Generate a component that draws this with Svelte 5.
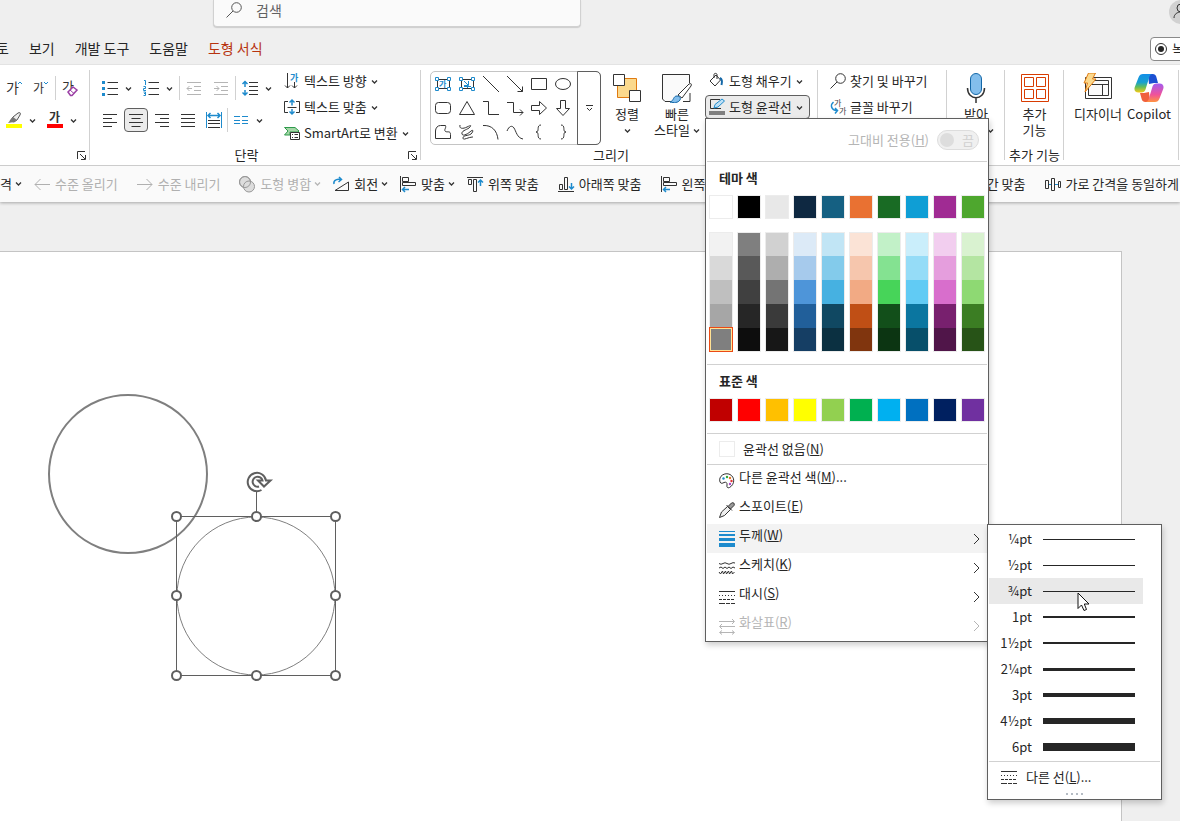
<script>
    const icons = {
        grow: `<text x="0" y="13" font-size="14" fill="#333">가</text><path d="M12 4l2-2 2 2" stroke="#1e8bcd"/>`,
        shrink: `<text x="0" y="13" font-size="12" fill="#333">가</text><path d="M11 2l2 2 2-2" stroke="#1e8bcd"/>`,
        clear: `<text x="0" y="11" font-size="13" fill="#333">가</text><path d="M6 12l5-5 4 3-5 5.500H8.500z" fill="#fff" stroke="#9b3fa5" stroke-width="1.500"/><path d="M8 10l4 3.500" stroke="#9b3fa5"/>`,
        highlight: `<path d="M4 9l3-4 5-4c2-1 3 0 2 2l-3 5-3 2z" fill="#eee" stroke="#555"/><path d="M7 5l4 3-3 2-6 1z" fill="#777" stroke="none"/><path d="M0 12h16v4H0z" fill="#ff0" stroke="none"/>`,
        fontColor: `<text x="2" y="10" font-size="12" font-weight="700" fill="#333">가</text><path d="M0 12h16v4H0z" fill="#f00" stroke="none"/>`,
        bullets: `<path d="M0 1h3v3H0zM0 7h3v3H0zM0 13h3v3H0z" fill="#1e8bcd" stroke="none"/><path d="M5.500 2.500H16M5.500 8.500H16M5.500 14.500H16"/>`,
        numbers: `<path d="M1 .5h1.500V5M.5 6.500h2v2h-2v2h2.500M.5 12h2v3.500h-2M1 13.500h1.500" stroke="#1e8bcd"/><path d="M5.500 2.500H16M5.500 8.500H16M5.500 14.500H16"/>`,
        outdent: `<path d="M1 2.500h14M8 6.500h7M8 10.500h7M1 14.500h14M6 8.500H1M3.500 6L1 8.500 3.500 11" stroke="#b5b5b5"/>`,
        indent: `<path d="M1 2.500h14M8 6.500h7M8 10.500h7M1 14.500h14M1 8.500h5M3.500 6L6 8.500 3.500 11" stroke="#b5b5b5"/>`,
        spacing: `<path d="M3 2v5M3 10v5M.5 4L3 1.500 5.500 4M.5 12.500L3 15l2.500-2.500" stroke="#1e8bcd" stroke-width="1.500"/><path d="M7 2.500h9M7 6.500h9M7 10.500h9M7 14.500h9"/>`,
        left: `<path d="M1 2.500h14M1 6.500h9M1 10.500h14M1 14.500h9"/>`,
        center: `<path d="M1 2.500h14M3.500 6.500h9M1 10.500h14M3.500 14.500h9"/>`,
        right: `<path d="M1 2.500h14M6 6.500h9M1 10.500h14M6 14.500h9"/>`,
        justify: `<path d="M1 2.500h14M1 6.500h14M1 10.500h14M1 14.500h14"/>`,
        distribute: `<path d="M.5 0v16M15.500 0v16" stroke="#1e8bcd"/><path d="M2 3.500h12M4.500 1L2 3.500 4.500 6M11.500 1L14 3.500 11.500 6" stroke="#1e8bcd" stroke-width="1.500"/><path d="M2 8.500h12M2 11.500h12M2 15.500h12"/>`,
        columns: `<path d="M1 4.500h6M1 8.500h6M1 11.500h6M9 4.500h6M9 8.500h6M9 11.500h6" stroke="#1e8bcd"/>`,
        direction: `<path d="M3.500 0v15M1 12.500L3.500 15 6 12.500M10.500 9v6M8 12.500l2.500 2.500 2.500-2.500"/><text x="6" y="8" font-size="9" font-weight="700" fill="#1e8bcd">가</text>`,
        textAlign: `<path d="M4 2.500H.5v11H4M12 2.500h3.500v11H12M3.500 8.500h9"/><path d="M8 6.500V1M5.500 3.500L8 1l2.500 2.500M8 10v5M5.500 12.500L8 15l2.500-2.500" stroke="#1e8bcd" stroke-width="1.500"/>`,
        smartArt: `<path d="M.5 2.500H11l4 3.500-1 1H6v3H.5L4 6z" fill="#a5d6a7" stroke="#2e9a4b"/><path d="M6.500 7.500h9v7h-9z" fill="#fff"/><path d="M8 9.500h1M10.500 9.500H14M8 12.500h1M10.500 12.500H14"/>`,
        fill: `<path d="M1 8l6-6 4.500 5L6 13z" fill="#fff"/><path d="M5 5V1.500c0-1.500 3-1.500 3 0V6"/><path d="M11 5c2 1 2.500 3 1.500 7" stroke="#1468a8" stroke-width="2"/>`,
        outline: `<path d="M12 9.500H1.500v-9H11"/><path d="M5 9l1-3.500L13 0l2.500 2L9 8z" fill="#bfe0f5" stroke="#1e8bcd"/><path d="M0 12h16v4H0z" fill="#7f7f7f" stroke="none"/>`,
        find: `<circle cx="10.500" cy="5.500" r="4.800"/><path d="M7 9L.5 15.500"/>`,
        replaceFont: `<text x="4" y="7" font-size="8" fill="#444">가</text><text x="9" y="15" font-size="8" fill="#444">가</text><path d="M3.500 3C0 6 1 11 7 11.500M5 9l2.500 2.500L5 14.500" stroke="#1e8bcd" stroke-width="1.500"/>`,
        levelUp: `<path d="M16 8.500H1M6.500 3L1 8.500 6.500 14" stroke="#b0b0b0"/>`,
        levelDown: `<path d="M0 8.500h15M9.500 3L15 8.500 9.500 14" stroke="#b0b0b0"/>`,
        merge: `<circle cx="6" cy="6" r="5.500" fill="#ddd" stroke="#999"/><circle cx="10" cy="10.500" r="5.500" fill="#ddd" stroke="#999"/><circle cx="6" cy="6" r="5.500" stroke="#999"/>`,
        rotate: `<path d="M2 14.500h13.500V6z"/><path d="M1 8c-1-4 4-5.500 7-4M6 1l2.500 2.500L5.500 6" stroke="#1e8bcd" stroke-width="1.500"/>`,
        alignLeft: `<path d="M.5 0v16M2.500 1.500h6v4h-6zM2.500 6.500h13v3h-13z"/><path d="M9 13.500H2.500M5 11l-2.500 2.500L5 16" stroke="#1e8bcd" stroke-width="1.500"/>`,
        alignTop: `<path d="M0 1.500h16M1.500 3.500h3v5h-3zM6.500 3.500h3v12h-3z"/><path d="M13.500 10V4M11 6.500L13.500 4 16 6.500" stroke="#1e8bcd" stroke-width="1.500"/>`,
        alignBottom: `<path d="M0 15.500h16M1.500 8.500h3v5h-3zM6.500 1.500h3v12h-3z"/><path d="M13.500 7v6M11 10.500l2.500 2.500 2.500-2.500" stroke="#1e8bcd" stroke-width="1.500"/>`,
        spread: `<path d="M.5 4.500h3v8h-3zM6.500 2.500h3v12h-3zM13.500 5.500h2v6h-2z"/><path d="M4 8.500h2M10 8.500h3" stroke="#1e8bcd"/>`,
        palette: `<path d="M1 9C-1 3 6-1 11 1.500c5 2.500 5 10-.5 13-2 1-3-.5-2.500-2.500.5-2-1-3.500-3-2.500-1.500.8-3 1.500-4-.5z" fill="#fff"/><circle cx="4.500" cy="5.500" r="1.200" fill="#1e8bcd" stroke="none"/><circle cx="8" cy="4" r="1.200" fill="#3a3" stroke="none"/><circle cx="11" cy="5" r="1.200" fill="#e87722" stroke="none"/><circle cx="12.500" cy="8" r="1.200" fill="#d33" stroke="none"/><circle cx="11" cy="11" r="1.200" fill="#a4c" stroke="none"/>`,
        eyedropper: `<path d="M.5 15.500l2-5.500 6-5.500 3 3-6 6z" fill="#eee"/><path d="M7.500 3l5.500 5.500"/><path d="M9 4.500l3.500-3.500c2-1 3.500.5 2.500 2.500l-3.500 3.500z" fill="#999"/>`,
        weight: `<path d="M0 0h16v1H0zM0 3h16v2H0zM0 7h16v3H0zM0 12h16v4H0z" fill="#1e8bcd" stroke="none"/>`,
        sketch: `<path d="M0 3.500q2 1.500 4 0t4 0 4 0 4-.5M0 8l2-1 2 1.500L6 7l2 1.500L10 7l2 1.500L14 7l2 1M0 12l1.500 2 2-3 1 3 2-3 1 3 2-3 1 3 2-3 1 3 2-2"/>`,
        dash: `<path d="M0 2.500h16"/><path d="M0 6.500h16" stroke-dasharray="1 2"/><path d="M0 10.500h16" stroke-dasharray="3 1"/><path d="M0 14.500h16" stroke-dasharray="6 1 4 1"/>`,
        arrows: `<path d="M0 3.500h15M13 1l2.500 2.500L13 6M1 8.500h15M3 6L.5 8.500 3 11M1 14.500h14M3 12.500l-2.500 2 2.500 2M13 12.500l2.500 2-2.500 2" stroke="#b5b5b5"/>`,
    };

    const shapes = [
        `<path d="M2.500 3.500h12v9h-12z"/><text x="4" y="11" font-size="8" font-weight="700" fill="#1e8bcd">가</text><path d="M.5 1.500h3v3h-3zM12.500 1.500h3v3h-3zM.5 11.500h3v3h-3zM12.500 11.500h3v3h-3z" fill="#fff" stroke="#1e8bcd"/>`,
        `<path d="M2.500 3.500h12v9h-12z"/><path d="M5 5l4 4M9.500 5v4.500H5M5 10.500h7M8.500 10v2" stroke="#1e8bcd"/><path d="M.5 1.500h3v3h-3zM12.500 1.500h3v3h-3zM.5 11.500h3v3h-3zM12.500 11.500h3v3h-3z" fill="#fff" stroke="#1e8bcd"/>`,
        `<path d="M0 0l16 16"/>`,
        `<path d="M0 0l15.500 15.500M15.500 10.500v5h-5"/>`,
        `<path d="M.5 2.500h15v11H.5z"/>`,
        `<ellipse cx="8" cy="8" rx="7.500" ry="5.500"/>`,
        `<rect x=".5" y="2.500" width="15" height="11" rx="3"/>`,
        `<path d="M8 1.500l7.500 13H.5z"/>`,
        `<path d="M0 1.500h5.500v13H16"/>`,
        `<path d="M0 2.500h6.500v10H16M13 9.500l3 3-3 3"/>`,
        `<path d="M.5 5.500h8v-4L15.500 8l-7 6.500v-4h-8z"/>`,
        `<path d="M5.500 .5v8h-4L8 15.500l6.500-7h-4v-8z"/>`,
        `<path d="M.5 14.500V7c0-3 2-5.500 5-5.500h5c1 3-2 4 0 6 2 1 5-1 5 3v4z"/>`,
        `<path d="M1 1c-1 4 3 4 7 2 4-2 5-2 2 1-3 2-8 3-7 6s7-1 9-3c3-2 2 1 0 3-3 2-8 1-8 4s5-1 10-1"/>`,
        `<path d="M0 1.500c9-.5 14 5 15 14"/>`,
        `<path d="M0 7c2-5 5-6 7-3s3 10 9 11"/>`,
        `<path d="M10 1c-5 0-1 7-5 7 4 0 0 7 5 7"/>`,
        `<path d="M6 1c5 0 1 7 5 7-4 0 0 7-5 7"/>`,
    ];

    const themeColors = [
        ["#ffffff", "#f2f2f2", "#d9d9d9", "#bfbfbf", "#a6a6a6", "#7f7f7f"],
        ["#000000", "#7f7f7f", "#595959", "#404040", "#262626", "#0d0d0d"],
        ["#e8e8e8", "#d1d1d1", "#aeaeae", "#747474", "#3a3a3a", "#171717"],
        ["#0e2841", "#dceaf7", "#a6caec", "#4e95d9", "#215f9a", "#153e64"],
        ["#156082", "#c1e5f5", "#83cbeb", "#46b1e1", "#104862", "#0b3041"],
        ["#e97132", "#fbe3d6", "#f6c6ad", "#f2aa84", "#c04f15", "#80350e"],
        ["#196b24", "#c2f1c8", "#84e291", "#47d459", "#124f1a", "#0c3512"],
        ["#0f9ed5", "#caeefb", "#95dcf7", "#61cbf4", "#0b76a0", "#074f6a"],
        ["#a02b93", "#f2ceef", "#e59edd", "#d86ecc", "#78206e", "#501549"],
        ["#4ea72e", "#d9f2d0", "#b4e5a2", "#8ed973", "#3b7d23", "#275317"],
    ];
    const standardColors = ["#c00000", "#ff0000", "#ffc000", "#ffff00", "#92d050", "#00b050", "#00b0f0", "#0070c0", "#002060", "#7030a0"];

    const weights = [
        { label: "¼pt", px: 1 },
        { label: "½pt", px: 1 },
        { label: "¾pt", px: 1 },
        { label: "1pt", px: 2 },
        { label: "1½pt", px: 2 },
        { label: "2¼pt", px: 3 },
        { label: "3pt", px: 4 },
        { label: "4½pt", px: 6 },
        { label: "6pt", px: 8 },
    ];

    const tabs = ["토", "보기", "개발 도구", "도움말", "도형 서식"];
    const handles = [[176, 264], [256, 264], [335, 264], [176, 343], [335, 343], [176, 423], [256, 423], [335, 423]];

    let activeTab = $state("도형 서식");
    let selectedColor = $state("0-5");
    let hoveredWeight = $state("¾pt");
</script>

{#snippet icon(name)}
    <svg class="icon" viewBox="0 0 16 16" aria-hidden="true">{@html icons[name]}</svg>
{/snippet}

{#snippet chevron()}
    <svg class="chevron" viewBox="0 0 7 7" aria-hidden="true"><path d="M1 2.500L3.500 5 6 2.500" /></svg>
{/snippet}

{#snippet launcher()}
    <button type="button" class="launcher" aria-label="대화 상자">
        <svg viewBox="0 0 9 9" aria-hidden="true"><path d="M.5 8V.5H8M3 3l5 5M8.500 4v4.500H4" /></svg>
    </button>
{/snippet}

{#snippet tool(name, active)}
    <button type="button" class="tool" class:active aria-label={name}>{@render icon(name)}</button>
{/snippet}

{#snippet split(name)}
    <span class="split">
        {@render tool(name, false)}
        <button type="button" class="drop" aria-label="{name} +">{@render chevron()}</button>
    </span>
{/snippet}

{#snippet command(name, label, hasDrop)}
    <button type="button" class="command">
        {@render icon(name)}<span>{label}</span>{#if hasDrop}{@render chevron()}{/if}
    </button>
{/snippet}

{#snippet quick(name, label, hasDrop, disabled)}
    <button type="button" class="quick" class:plain={!hasDrop} {disabled}>
        {#if name}{@render icon(name)}{/if}<span>{label}</span>{#if hasDrop}{@render chevron()}{/if}
    </button>
{/snippet}

{#snippet arrow()}
    <svg class="arrow" viewBox="0 0 7 12" aria-hidden="true"><path d="M1 1l5 5-5 5" /></svg>
{/snippet}

<div class="window">
    <header>
        <div class="title-bar">
            <label class="search">
                {@render icon("find")}
                <input type="search" placeholder="검색" aria-label="검색">
            </label>
            <button type="button" class="avatar" aria-label="계정">
                <svg viewBox="0 0 24 24" aria-hidden="true"><circle cx="12" cy="8" r="4" /><path d="M5 18c0-8 14-8 14 0" /></svg>
            </button>
        </div>
        <div class="tab-row">
            <nav>
                {#each tabs as tab}
                    <button type="button" class:current={tab === activeTab} onclick={() => activeTab = tab}>{tab}</button>
                {/each}
            </nav>
            <button type="button" class="record">
                <svg viewBox="0 0 12 12" aria-hidden="true"><circle cx="6" cy="6" r="5.500" /><circle class="dot" cx="6" cy="6" r="3" /></svg>
                <span>녹</span>
            </button>
        </div>
    </header>

    <div class="ribbon">
        <section class="group font">
            <div class="body">
                <div class="rows">
                    <div class="row">
                        {@render tool("grow", false)}
                        {@render tool("shrink", false)}
                        <i class="divider"></i>
                        {@render tool("clear", false)}
                    </div>
                    <div class="row">
                        {@render split("highlight")}
                        {@render split("fontColor")}
                    </div>
                </div>
            </div>
            <div class="caption"><span></span>{@render launcher()}</div>
        </section>

        <section class="group paragraph">
            <div class="body">
                <div class="rows">
                    <div class="row">
                        {@render split("bullets")}
                        {@render split("numbers")}
                        <i class="divider"></i>
                        {@render tool("outdent", false)}
                        {@render tool("indent", false)}
                        <i class="divider"></i>
                        {@render split("spacing")}
                    </div>
                    <div class="row tight">
                        {@render tool("left", false)}
                        {@render tool("center", true)}
                        {@render tool("right", false)}
                        {@render tool("justify", false)}
                        {@render tool("distribute", false)}
                        <i class="divider"></i>
                        {@render split("columns")}
                    </div>
                </div>
                <div class="commands">
                    {@render command("direction", "텍스트 방향", true)}
                    {@render command("textAlign", "텍스트 맞춤", true)}
                    {@render command("smartArt", "SmartArt로 변환", true)}
                </div>
            </div>
            <div class="caption"><span>단락</span>{@render launcher()}</div>
        </section>

        <section class="group drawing">
            <div class="body">
                <div class="gallery">
                    <div class="shapes">
                        {#each shapes as shape, i}
                            <button type="button" aria-label="도형 {i + 1}">
                                <svg class="icon" viewBox="0 0 16 16" aria-hidden="true">{@html shape}</svg>
                            </button>
                        {/each}
                    </div>
                    <button type="button" class="more" aria-label="자세히">
                        <svg viewBox="0 0 7 7" aria-hidden="true"><path d="M0 .5h7M1 3l2.500 2.500L6 3" /></svg>
                    </button>
                </div>
                <button type="button" class="big arrange">
                    <svg viewBox="0 0 30 30" aria-hidden="true">
                        <path d="M5.500 5.500h19v19h-19z" fill="#fbd98d" stroke="#e07a10" />
                        <path d="M1.500 1.500h11v11h-11zM17.500 17.500h11v11h-11z" fill="#fff" />
                    </svg>
                    <span>정렬</span>
                    {@render chevron()}
                </button>
                <button type="button" class="big style">
                    <svg viewBox="0 0 30 30" aria-hidden="true">
                        <path d="M10 28.500H3L.5 26V1.500h27V10M28 20v8.500H21" fill="#fafafa" />
                        <path d="M16 22L27 11c2-1 3 0 2 2l-9 12z" fill="#fff" />
                        <path d="M8 29c4-1 3-6 7-6 3 0 4 2 3 4-2 3-6 3-10 2z" fill="#83beec" stroke="#1468a8" />
                    </svg>
                    <span>빠른</span>
                    <span class="line">스타일 {@render chevron()}</span>
                </button>
                <div class="commands">
                    {@render command("fill", "도형 채우기", true)}
                    <div class="anchor">
                        <button type="button" class="command open" aria-expanded="true">
                            {@render icon("outline")}<span>도형 윤곽선</span>{@render chevron()}
                        </button>

                        <div class="menu">
                            <label class="contrast">
                                <span>고대비 전용(<u>H</u>)</span>
                                <input type="checkbox" disabled>
                                <span class="toggle"><i></i>끔</span>
                            </label>
                            <h3>테마 색</h3>
                            <div class="swatches">
                                {#each themeColors as column}
                                    <button type="button" class="swatch" style="background: {column[0]}" aria-label={column[0]}></button>
                                {/each}
                            </div>
                            <div class="swatches shades">
                                {#each themeColors as column, c}
                                    <div class="shade-column">
                                        {#each column.slice(1) as color, r}
                                            <button
                                                type="button"
                                                class:selected={selectedColor === `${c}-${r + 1}`}
                                                style="background: {color}"
                                                aria-label={color}
                                                onclick={() => selectedColor = `${c}-${r + 1}`}
                                            ></button>
                                        {/each}
                                    </div>
                                {/each}
                            </div>
                            <h3 class="ruled">표준 색</h3>
                            <div class="swatches standard">
                                {#each standardColors as color}
                                    <button type="button" class="swatch" style="background: {color}" aria-label={color}></button>
                                {/each}
                            </div>
                            <button type="button" class="no-outline"><i></i><span>윤곽선 없음(<u>N</u>)</span></button>
                            <button type="button" class="item">{@render icon("palette")}<span>다른 윤곽선 색(<u>M</u>)...</span></button>
                            <button type="button" class="item">{@render icon("eyedropper")}<span>스포이트(<u>E</u>)</span></button>
                            <div class="anchor">
                                <button type="button" class="item hover">{@render icon("weight")}<span>두께(<u>W</u>)</span>{@render arrow()}</button>
                                <div class="menu submenu">
                                    {#each weights as weight}
                                        <button
                                            type="button"
                                            class="weight"
                                            class:hover={hoveredWeight === weight.label}
                                            onmouseenter={() => hoveredWeight = weight.label}
                                        >
                                            <span>{weight.label}</span>
                                            <i style="height: {weight.px}px"></i>
                                            {#if hoveredWeight === weight.label}
                                                <svg class="cursor" viewBox="0 0 13 20" aria-hidden="true"><path d="M1 1v15.500l3.500-3.500 2.500 5.500 2.500-1L7.300 12H12z" /></svg>
                                            {/if}
                                        </button>
                                    {/each}
                                    <button type="button" class="more-lines">{@render icon("dash")}<span>다른 선(<u>L</u>)...</span></button>
                                    <div class="grip"><i></i><i></i><i></i><i></i></div>
                                </div>
                            </div>
                            <button type="button" class="item">{@render icon("sketch")}<span>스케치(<u>K</u>)</span>{@render arrow()}</button>
                            <button type="button" class="item">{@render icon("dash")}<span>대시(<u>S</u>)</span>{@render arrow()}</button>
                            <button type="button" class="item" disabled>{@render icon("arrows")}<span>화살표(<u>R</u>)</span>{@render arrow()}</button>
                        </div>
                    </div>
                </div>
            </div>
            <div class="caption"><span>그리기</span></div>
        </section>

        <section class="group editing">
            <div class="body">
                <div class="commands">
                    {@render command("find", "찾기 및 바꾸기", false)}
                    {@render command("replaceFont", "글꼴 바꾸기", false)}
                </div>
            </div>
        </section>

        <section class="group voice">
            <div class="body">
                <button type="button" class="big">
                    <svg viewBox="0 0 30 30" aria-hidden="true">
                        <rect x="9.500" y=".5" width="11" height="21" rx="5.500" fill="#83beec" stroke="#1468a8" />
                        <path d="M6.500 15c0 13 17 13 17 0M15 25v5" stroke-width="1.500" />
                    </svg>
                    <span>받아</span>
                    <span class="line end">{@render chevron()}</span>
                </button>
            </div>
        </section>

        <section class="group addins">
            <div class="body">
                <button type="button" class="big">
                    <svg viewBox="0 0 30 30" aria-hidden="true">
                        <path d="M1.500 1.500h27v27h-27zM4.500 4.500h9v9h-9zM16.500 4.500h9v9h-9zM4.500 16.500h9v9h-9zM16.500 16.500h9v9h-9z" stroke="#d83b01" />
                    </svg>
                    <span>추가</span>
                    <span>기능</span>
                </button>
            </div>
            <div class="caption"><span>추가 기능</span></div>
        </section>

        <section class="group designer">
            <div class="body">
                <button type="button" class="big">
                    <svg viewBox="0 0 30 30" aria-hidden="true">
                        <path d="M2.500 4.500h26v21h-26z" fill="#fff" />
                        <path d="M5.500 7.500h20v15h-20zM5.500 11.500h20M19.500 11.500v11" fill="#fafafa" />
                        <path d="M5.500 0h7l-3 6h3.500L2 19l2.500-9H1z" fill="#fbd98d" stroke="#e07a10" />
                    </svg>
                    <span>디자이너</span>
                </button>
                <button type="button" class="big copilot">
                    <svg viewBox="0 0 30 30" aria-hidden="true">
                        <defs>
                            <linearGradient id="cool" x1="0" y1="0" x2="0" y2="1">
                                <stop offset="0" stop-color="#138fe8" /><stop offset=".45" stop-color="#17a0d0" />
                                <stop offset=".7" stop-color="#62be5a" /><stop offset="1" stop-color="#f7ca16" />
                            </linearGradient>
                            <linearGradient id="warm" x1="0" y1="0" x2="0" y2="1">
                                <stop offset="0" stop-color="#ff9340" /><stop offset=".4" stop-color="#f0529a" />
                                <stop offset="1" stop-color="#a35cf0" />
                            </linearGradient>
                        </defs>
                        <g stroke="none">
                            <path d="M14 1h4.500c2.500 0 3.500 1.500 4 3.500L24 10h-4l-5 1z" fill="#1c50d2" />
                            <path d="M16 29h-4.500c-2.500 0-3.500-1.500-4-3.500L6 20h4l5-1z" fill="#f0603c" />
                            <path d="M9 1h9.500c-2.500.5-3 2-3.500 4l-3.500 11.500c-.6 2-2 3-4 3H4.500C1 19.500-.2 17 .8 14L4.500 4.500C5.300 2 7 1 9 1z" fill="url(#cool)" />
                            <path d="M9 1h9.500c-2.500.5-3 2-3.500 4l-3.500 11.500c-.6 2-2 3-4 3H4.500C1 19.500-.2 17 .8 14L4.500 4.500C5.300 2 7 1 9 1z" fill="url(#warm)" transform="rotate(180 15 15)" />
                        </g>
                    </svg>
                    <span>Copilot</span>
                </button>
            </div>
        </section>
    </div>

    <div class="quick-bar">
        {@render quick("", "격", true, false)}
        {@render quick("levelUp", "수준 올리기", false, true)}
        {@render quick("levelDown", "수준 내리기", false, true)}
        {@render quick("merge", "도형 병합", true, true)}
        {@render quick("rotate", "회전", true, false)}
        {@render quick("alignLeft", "맞춤", true, false)}
        {@render quick("alignTop", "위쪽 맞춤", false, false)}
        {@render quick("alignBottom", "아래쪽 맞춤", false, false)}
        {@render quick("alignLeft", "왼쪽", false, false)}
        <div class="quick-end">
            {@render quick("", "간 맞춤", false, false)}
            {@render quick("spread", "가로 간격을 동일하게", false, false)}
        </div>
    </div>

    <main>
        <div class="slide">
            <svg width="400" height="460" aria-hidden="true">
                <circle cx="128" cy="222" r="79" stroke="#7f7f7f" stroke-width="2" />
                <circle cx="256" cy="344" r="79" stroke="#7f7f7f" />
                <g stroke="#5f5f5f">
                    <path d="M176.500 264.500h159v159h-159zM256.500 240v24" />
                    {#each handles as [x, y]}
                        <circle cx={x + 0.5} cy={y + 0.5} r="4.500" fill="#fff" stroke-width="2" />
                    {/each}
                    <path d="M261.500 238A9.200 9.200 0 1 1 266 228.500h4.500L264 234.500l-6-6h4.500a5 5 0 1 0-3.500 6" fill="#fff" stroke-width="2" />
                </g>
            </svg>
        </div>
    </main>
</div>

<style>
    :global(body) {
        margin: 0;
        overflow: hidden;
    }

    .window {
        display: flex;
        flex-direction: column;
        min-height: 100vh;
        overflow: hidden;
        background: #efefef;
        color: #262626;
        font: 13px/16px "Noto Sans CJK KR", "Noto Sans", sans-serif;
    }

    .window :global(*) {
        box-sizing: border-box;
    }

    button, input {
        font: inherit;
        color: inherit;
    }

    button {
        margin: 0;
        padding: 0;
        border: 0;
        background: none;
        white-space: nowrap;
    }

    svg {
        display: block;
        flex: none;
        fill: none;
        stroke: #333;
    }

    .icon {
        width: 16px;
        height: 16px;
        overflow: visible;
    }

    .icon :global(text) {
        stroke: none;
    }

    .chevron {
        width: 7px;
        height: 7px;
        stroke-width: 1.3;
    }

    .title-bar {
        display: flex;
        justify-content: space-between;
        height: 27px;
        padding-left: 213px;
    }

    .search {
        display: flex;
        align-items: center;
        gap: 14px;
        width: 368px;
        padding: 0 12px 7px;
        background: #fafafa;
        border: 1px solid #d1d1d1;
        border-top: 0;
        border-radius: 0 0 4px 4px;
        box-shadow: 0 1px 1px #ccc;
    }

    .search svg {
        stroke: #555;
    }

    .search input {
        flex: 1;
        min-width: 0;
        padding: 0;
        border: 0;
        outline: 0;
        background: none;
        font-size: 14px;
    }

    .search input::placeholder {
        color: #616161;
    }

    .avatar {
        width: 24px;
        height: 24px;
        margin-right: -13px;
        border-radius: 50%;
        background: #d1d1d1;
    }

    .tab-row {
        display: flex;
        align-items: center;
        justify-content: space-between;
        height: 38px;
        padding-top: 7px;
        border-bottom: 1px solid #e3e3e3;
    }

    nav {
        display: flex;
        gap: 20px;
        margin-left: -4px;
        padding-bottom: 2px;
        font-size: 14px;
    }

    .current {
        color: #b7330f;
    }

    .record {
        display: flex;
        align-items: center;
        gap: 5px;
        width: 60px;
        height: 24px;
        margin-right: -30px;
        padding-left: 4px;
        border: 1px solid #8a8a8a;
        border-radius: 4px;
        background: #fff;
    }

    .record svg {
        width: 12px;
        height: 12px;
        overflow: visible;
    }

    .dot {
        fill: #262626;
        stroke: none;
    }

    .ribbon {
        display: flex;
        position: relative;
        z-index: 2;
        height: 101px;
        background: #fff;
        border-bottom: 1px solid #ccc;
    }

    .group {
        display: flex;
        flex: none;
        flex-direction: column;
        position: relative;
        padding-top: 3px;
    }

    /* group separator */
    .group::after {
        content: "";
        position: absolute;
        inset: 5px 0 5px auto;
        width: 1px;
        background: #d1d1d1;
    }

    .font { width: 90px; }
    .paragraph { width: 331px; padding-left: 7px; }
    .drawing { width: 397px; padding-left: 9px; }
    .editing { width: 129px; padding-left: 12px; }
    .voice { width: 58px; }
    .addins { width: 59px; }
    .designer { width: 115px; padding-left: 6px; }

    .body {
        display: flex;
        height: 78px;
    }

    .caption {
        display: flex;
        align-items: center;
        justify-content: center;
        height: 18px;
    }

    .caption span {
        flex: 1;
        text-align: center;
    }

    .paragraph .caption span {
        padding-right: 8px;
    }

    .drawing .caption {
        padding-right: 26px;
    }

    .launcher {
        margin: 0 4px;
    }

    .launcher svg {
        width: 9px;
        height: 9px;
    }

    .rows {
        display: flex;
        flex-direction: column;
        gap: 8px;
        padding-top: 8px;
    }

    .paragraph .rows {
        width: 187px;
    }

    .row {
        display: flex;
        align-items: center;
        gap: 1px;
    }

    .font .row {
        padding-left: 1px;
    }

    .tight {
        gap: 0;
    }

    .divider {
        width: 1px;
        height: 24px;
        background: #d1d1d1;
    }

    .tool {
        display: grid;
        place-items: center;
        width: 26px;
        height: 24px;
        border-radius: 4px;
    }

    .tool.active {
        width: 24px;
        margin: 0 1px;
        background: #ebebeb;
        border: 1px solid #5f5f5f;
    }

    .split {
        display: flex;
    }

    .drop {
        display: grid;
        place-items: center start;
        width: 14px;
        padding-left: 2px;
    }

    .commands {
        display: flex;
        flex-direction: column;
    }

    .command {
        display: flex;
        align-items: center;
        gap: 4px;
        height: 26px;
    }

    .gallery {
        display: flex;
        width: 171px;
        height: 74px;
        margin-top: 3px;
        border: 1px solid #c4c4c4;
        border-radius: 5px;
    }

    .shapes {
        display: grid;
        flex: 1;
        grid-template-columns: repeat(6, 24px);
    }

    .shapes button {
        display: grid;
        place-items: center;
    }

    .more {
        display: grid;
        place-items: center;
        width: 24px;
        margin: -1px;
        border: 1px solid #5f5f5f;
        border-radius: 0 5px 5px 0;
    }

    .more svg {
        width: 7px;
        height: 7px;
    }

    .big {
        display: flex;
        flex: 1;
        flex-direction: column;
        align-items: center;
        padding-top: 5px;
    }

    .big > svg:first-child {
        width: 30px;
        height: 30px;
        margin-bottom: 3px;
    }

    .big > .chevron {
        margin-top: 5px;
    }

    .arrange {
        flex: 0 0 52px;
    }

    .style {
        flex: 0 0 48px;
        margin-right: 4px;
    }

    .copilot {
        flex: 0 0 46px;
        margin-right: 7px;
    }

    .line {
        display: flex;
        align-items: center;
        gap: 3px;
        height: 16px;
    }

    .end {
        padding-left: 28px;
    }

    .drawing .command {
        height: 24px;
        margin: 1px 0;
        padding-left: 4px;
    }

    .drawing .command.open {
        width: 105px;
        padding-left: 3px;
        background: #ebebeb;
        border: 1px solid #5f5f5f;
        border-radius: 4px;
    }

    .anchor {
        position: relative;
    }

    .menu {
        position: absolute;
        top: 24px;
        left: 0;
        z-index: 5;
        width: 284px;
        padding: 0 1px 1px;
        background: #fff;
        border: 1px solid #5f5f5f;
        box-shadow: 1px 3px 6px rgba(0, 0, 0, .2);
    }

    .contrast {
        display: flex;
        align-items: center;
        justify-content: flex-end;
        gap: 8px;
        height: 43px;
        padding-right: 8px;
        border-bottom: 1px solid #d1d1d1;
        color: #b5b5b5;
    }

    .contrast input {
        position: absolute;
        opacity: 0;
    }

    .toggle {
        display: flex;
        align-items: center;
        gap: 8px;
        width: 42px;
        height: 20px;
        padding-left: 2px;
        border: 1px solid #ddd;
        border-radius: 10px;
        background: #f0f0f0;
        color: #d1d1d1;
    }

    .toggle i {
        width: 14px;
        height: 14px;
        border-radius: 50%;
        background: #ddd;
    }

    h3 {
        margin: 0;
        padding: 8px 12px 9px;
        font-size: 13px;
        line-height: 16px;
    }

    .ruled {
        margin-top: 12px;
        border-top: 1px solid #d1d1d1;
    }

    .swatches {
        display: flex;
        justify-content: space-between;
        padding: 0 2px;
    }

    .swatch {
        width: 24px;
        height: 24px;
        border: 1px solid #ececec;
    }

    .shades {
        margin-top: 13px;
    }

    .shade-column {
        display: grid;
        grid-template-rows: 23px 24px 24px 24px 23px;
        width: 24px;
        border: 1px solid #ececec;
    }

    .selected {
        outline: 1px solid #eb4a14;
        box-shadow: inset 0 0 0 1px #ffe294;
    }

    .standard {
        padding-bottom: 11px;
    }

    .no-outline {
        display: flex;
        align-items: center;
        gap: 8px;
        width: 100%;
        height: 32px;
        margin-bottom: 1px;
        padding-left: 12px;
        border-top: 1px solid #d1d1d1;
        border-bottom: 1px solid #d1d1d1;
    }

    .no-outline i {
        width: 16px;
        height: 16px;
        border: 1px solid #ececec;
    }

    .item {
        display: flex;
        align-items: center;
        gap: 4px;
        width: 100%;
        height: 29px;
        padding: 0 7px 0 12px;
        text-align: left;
    }

    .item span {
        flex: 1;
        padding-bottom: 8px;
    }

    .hover {
        background: #f3f3f3;
    }

    .arrow {
        width: 7px;
        height: 12px;
    }

    .item:disabled {
        color: #b5b5b5;
    }

    .item:disabled .arrow,
    .quick:disabled .chevron {
        stroke: #b5b5b5;
    }

    .submenu {
        top: 0;
        left: 280px;
        width: 175px;
        padding: 1px 1px 0;
    }

    .weight {
        display: flex;
        align-items: center;
        gap: 11px;
        position: relative;
        width: 154px;
        height: 26px;
    }

    .weight span {
        width: 43px;
        text-align: right;
    }

    .weight i {
        width: 92px;
        background: #262626;
    }

    .weight.hover {
        background: #e9e9e9;
    }

    .cursor {
        position: absolute;
        top: 14px;
        left: 88px;
        width: 13px;
        height: 20px;
        fill: #fff;
        stroke: #111;
    }

    .more-lines {
        display: flex;
        align-items: center;
        gap: 9px;
        width: 100%;
        height: 30px;
        margin-top: 1px;
        padding-left: 12px;
        border-top: 1px solid #d1d1d1;
    }

    .grip {
        display: flex;
        justify-content: center;
        gap: 3px;
        padding: 2px 0 4px;
    }

    .grip i {
        width: 2px;
        height: 2px;
        background: #b5bcc4;
    }

    .quick-bar {
        display: flex;
        align-items: center;
        gap: 12px;
        position: relative;
        z-index: 1;
        height: 36px;
        padding: 0 1px 1px 0;
        background: #fafafa;
        box-shadow: 0 1px 3px rgba(0, 0, 0, .3);
    }

    .quick {
        display: flex;
        flex: none;
        align-items: center;
        gap: 5px;
    }

    .quick .chevron {
        margin-left: -2px;
    }

    .plain {
        padding-right: 7px;
    }

    .quick:disabled {
        color: #b0b0b0;
    }

    .quick-end {
        display: flex;
        gap: 12px;
        margin-left: auto;
    }

    .quick-end .quick:last-child {
        padding-right: 0;
    }

    main {
        display: flex;
        flex: 1;
        flex-direction: column;
        padding: 49px 58px 0 0;
    }

    .slide {
        flex: 1;
        background: #fff;
        border: 1px solid #c4c4c4;
        border-width: 1px 1px 0 0;
    }
</style>
